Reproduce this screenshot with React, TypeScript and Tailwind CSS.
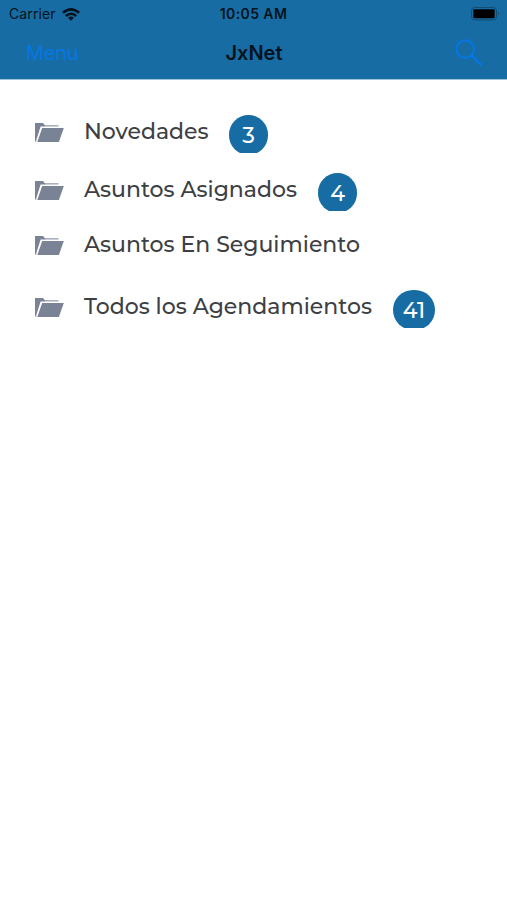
interface Folder {
    name: string;
    count?: number;
    rowClass: string;
    labelClass: string;
    badgeClass?: string;
}

const folders: Folder[] = [
    { name: 'Novedades', count: 3, rowClass: 'h-[58px]', labelClass: 'w-[145px]', badgeClass: 'w-[39px]' },
    { name: 'Asuntos Asignados', count: 4, rowClass: 'h-[58px]', labelClass: 'w-[234px]', badgeClass: 'w-[39px]' },
    { name: 'Asuntos En Seguimiento', rowClass: 'h-[52px]', labelClass: 'w-[291px]' },
    { name: 'Todos los Agendamientos', count: 41, rowClass: 'h-[72px]', labelClass: 'w-[309px]', badgeClass: 'w-[42px]' },
];

const FolderIcon = () => (
    <svg className="mt-px w-[29px] h-5 shrink-0" viewBox="0 0 29 20" fill="#7a8296">
        <path d="M9 2H23.5V3.6H9Z" fill="#a9b0be" />
        <path d="M0 0H8L9.8 2.2V3.6H5.6L1.3 17V18.6H0Z" />
        <path d="M7.2 5H28.8L23.9 19H2.3Z" />
    </svg>
);

const WifiIcon = () => (
    <svg className="w-[18px] h-[13px]" viewBox="0 0 18 13" fill="none" stroke="#03121c" strokeWidth="2.6">
        <path d="M.9 4.8Q9-2.2 17.1 4.8" />
        <path d="M3.8 8Q9 3.5 14.2 8" />
        <path d="M9 12.8L6 9.8Q9 7.4 12 9.8Z" fill="#03121c" stroke="none" />
    </svg>
);

const BatteryIcon = () => (
    <svg className="w-[29px] h-[14px]" viewBox="0 0 29 14">
        <rect x="0.5" y="0.5" width="25" height="12.5" rx="3.5" fill="none" stroke="#0f4d73" />
        <rect x="2.3" y="2.3" width="21.4" height="9" rx="1.3" fill="#000" />
        <path d="M27 4.7Q29 6.7 27 8.8Z" fill="#0f4d73" />
    </svg>
);

const SearchIcon = () => (
    <svg className="w-[27px] h-[27px]" viewBox="0 0 27 27" fill="none" stroke="#0676e6" strokeWidth="2">
        <circle cx="10.2" cy="10" r="8.8" />
        <path d="M16.6 16.4L26.2 26" strokeWidth="2.5" />
    </svg>
);

const App = () => {
    return (
        <div className="h-screen w-full bg-white overflow-hidden font-['Inter',sans-serif]">
            <header className="h-20 bg-[#176da3] border-b border-[#9cc4da]">
                {/* Status bar */}
                <div className="h-7 grid grid-cols-3 items-center pl-[9px] pr-[7px] text-[#03121c]">
                    <div className="flex items-center gap-[6px]">
                        <span className="text-[14px] leading-5 tracking-[0.1px] -mt-px">Carrier</span>
                        <WifiIcon />
                    </div>
                    <span className="-mt-px -ml-0.5 text-center text-[14px] leading-5 font-semibold tracking-[0.4px] whitespace-nowrap">10:05 AM</span>
                    <div className="flex justify-end"><BatteryIcon /></div>
                </div>

                {/* Navigation */}
                <div className="h-[49px] grid grid-cols-3 items-center pl-[26px] pr-[25px]">
                    <button className="text-left text-[20px] tracking-[-0.3px] text-[#0676e6]">Menu</button>
                    <h1 className="text-center text-[20px] font-semibold text-[#03121c]">JxNet</h1>
                    <button className="flex justify-end" aria-label="Buscar"><SearchIcon /></button>
                </div>
            </header>

            <main className="pt-[23px] pl-[35px] font-['Montserrat','Inter',sans-serif] font-medium">
                {folders.map((folder) => (
                    <div key={folder.name} className={`flex items-center ${folder.rowClass}`}>
                        <FolderIcon />
                        <span className={`ml-5 -mt-px shrink-0 whitespace-nowrap text-[22px] leading-7 text-[#3d3f44] ${folder.labelClass}`}>
                            {folder.name}
                        </span>
                        {folder.count !== undefined && (
                            <span className={`mt-[3px] h-[38px] shrink-0 overflow-hidden ${folder.badgeClass}`}>
                                <span className="flex h-10 items-center justify-center rounded-full bg-[#176da3] pt-[2px] text-[22px] text-white">
                                    {folder.count}
                                </span>
                            </span>
                        )}
                    </div>
                ))}
            </main>
        </div>
    );
};

export default App;
